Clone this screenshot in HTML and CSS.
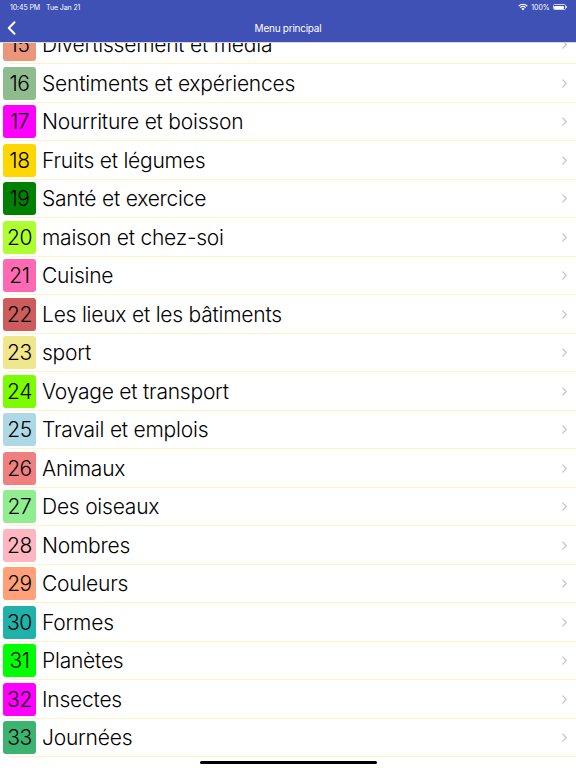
FILE: index.html
```html
<!DOCTYPE html>
<html lang="fr">
<head>
<meta charset="utf-8">
<title>Menu principal</title>
<link rel="stylesheet" href="styles.css">
</head>
<body>
<header class="bar">
  <div class="status">
    <span class="time">10:45 PM</span>
    <span class="date">Tue Jan 21</span>
    <span class="status-right">
      <svg class="wifi" width="10" height="8" viewBox="0 0 10 8"><path d="M5 7.6 3.4 5.8a2.4 2.4 0 0 1 3.2 0z" fill="#fff"/><path d="M1.9 4.2a4.6 4.6 0 0 1 6.2 0l-.8.9a3.4 3.4 0 0 0-4.6 0z" fill="#fff"/><path d="M.3 2.5a6.9 6.9 0 0 1 9.4 0l-.8.9a5.7 5.7 0 0 0-7.8 0z" fill="#fff"/></svg>
      <span class="pct">100%</span>
      <span class="battery"><span class="battery-fill"></span></span><span class="battery-tip"></span>
    </span>
  </div>
  <div class="nav">
    <svg class="back" width="9" height="14" viewBox="0 0 9 14"><path d="M7.5 1.2 1.8 7l5.7 5.8" fill="none" stroke="#fff" stroke-width="2" stroke-linecap="round" stroke-linejoin="round"/></svg>
    <span class="title">Menu principal</span>
  </div>
</header>
<main class="viewport">
  <ul class="list">
    <li class="row"><span class="num c15">15</span><span class="label">Divertissement et média</span><svg class="chev" width="5" height="9" viewBox="0 0 5 9"><path d="M.8.8 4.2 4.5.8 8.2"/></svg></li>
    <li class="row"><span class="num c16">16</span><span class="label">Sentiments et expériences</span><svg class="chev" width="5" height="9" viewBox="0 0 5 9"><path d="M.8.8 4.2 4.5.8 8.2"/></svg></li>
    <li class="row"><span class="num c17">17</span><span class="label">Nourriture et boisson</span><svg class="chev" width="5" height="9" viewBox="0 0 5 9"><path d="M.8.8 4.2 4.5.8 8.2"/></svg></li>
    <li class="row"><span class="num c18">18</span><span class="label">Fruits et légumes</span><svg class="chev" width="5" height="9" viewBox="0 0 5 9"><path d="M.8.8 4.2 4.5.8 8.2"/></svg></li>
    <li class="row"><span class="num c19">19</span><span class="label">Santé et exercice</span><svg class="chev" width="5" height="9" viewBox="0 0 5 9"><path d="M.8.8 4.2 4.5.8 8.2"/></svg></li>
    <li class="row"><span class="num c20">20</span><span class="label">maison et chez-soi</span><svg class="chev" width="5" height="9" viewBox="0 0 5 9"><path d="M.8.8 4.2 4.5.8 8.2"/></svg></li>
    <li class="row"><span class="num c21">21</span><span class="label">Cuisine</span><svg class="chev" width="5" height="9" viewBox="0 0 5 9"><path d="M.8.8 4.2 4.5.8 8.2"/></svg></li>
    <li class="row"><span class="num c22">22</span><span class="label">Les lieux et les bâtiments</span><svg class="chev" width="5" height="9" viewBox="0 0 5 9"><path d="M.8.8 4.2 4.5.8 8.2"/></svg></li>
    <li class="row"><span class="num c23">23</span><span class="label">sport</span><svg class="chev" width="5" height="9" viewBox="0 0 5 9"><path d="M.8.8 4.2 4.5.8 8.2"/></svg></li>
    <li class="row"><span class="num c24">24</span><span class="label">Voyage et transport</span><svg class="chev" width="5" height="9" viewBox="0 0 5 9"><path d="M.8.8 4.2 4.5.8 8.2"/></svg></li>
    <li class="row"><span class="num c25">25</span><span class="label">Travail et emplois</span><svg class="chev" width="5" height="9" viewBox="0 0 5 9"><path d="M.8.8 4.2 4.5.8 8.2"/></svg></li>
    <li class="row"><span class="num c26">26</span><span class="label">Animaux</span><svg class="chev" width="5" height="9" viewBox="0 0 5 9"><path d="M.8.8 4.2 4.5.8 8.2"/></svg></li>
    <li class="row"><span class="num c27">27</span><span class="label">Des oiseaux</span><svg class="chev" width="5" height="9" viewBox="0 0 5 9"><path d="M.8.8 4.2 4.5.8 8.2"/></svg></li>
    <li class="row"><span class="num c28">28</span><span class="label">Nombres</span><svg class="chev" width="5" height="9" viewBox="0 0 5 9"><path d="M.8.8 4.2 4.5.8 8.2"/></svg></li>
    <li class="row"><span class="num c29">29</span><span class="label">Couleurs</span><svg class="chev" width="5" height="9" viewBox="0 0 5 9"><path d="M.8.8 4.2 4.5.8 8.2"/></svg></li>
    <li class="row"><span class="num c30">30</span><span class="label">Formes</span><svg class="chev" width="5" height="9" viewBox="0 0 5 9"><path d="M.8.8 4.2 4.5.8 8.2"/></svg></li>
    <li class="row"><span class="num c31">31</span><span class="label">Planètes</span><svg class="chev" width="5" height="9" viewBox="0 0 5 9"><path d="M.8.8 4.2 4.5.8 8.2"/></svg></li>
    <li class="row"><span class="num c32">32</span><span class="label">Insectes</span><svg class="chev" width="5" height="9" viewBox="0 0 5 9"><path d="M.8.8 4.2 4.5.8 8.2"/></svg></li>
    <li class="row"><span class="num c33">33</span><span class="label">Journées</span><svg class="chev" width="5" height="9" viewBox="0 0 5 9"><path d="M.8.8 4.2 4.5.8 8.2"/></svg></li>
  </ul>
</main>
<div class="home"></div>
</body>
</html>
```
FILE: styles.css
```css
* { box-sizing: border-box; }
html, body { margin: 0; padding: 0; }
body {
  width: 576px;
  height: 768px;
  overflow: hidden;
  position: relative;
  background: #fff;
  font-family: Inter, "Liberation Sans", sans-serif;
  color: #000;
}
.bar {
  height: 43px;
  background: #3f51b5;
  color: #fff;
  border-bottom: 1px solid #d8d8dc;
  position: relative;
  z-index: 1;
}
.status {
  height: 14px;
  padding: 0 9px 0 10px;
  display: flex;
  align-items: center;
  font-size: 7px;
  letter-spacing: -0.1px;
}
.date { margin-left: 6px; }
.status-right { margin-left: auto; display: flex; align-items: center; gap: 3px; }
.battery {
  width: 13px;
  height: 6px;
  border: 0.5px solid #cfd4ee;
  border-radius: 1.5px;
  padding: 0.5px;
  display: flex;
}
.battery-fill { flex: 1; background: #fff; border-radius: 1px; }
.battery-tip { width: 1px; height: 2px; background: #cfd4ee; margin-left: -2.5px; }
.nav {
  height: 28px;
  position: relative;
  display: flex;
  align-items: center;
  justify-content: center;
}
.title { font-size: 10px; letter-spacing: -0.25px; }
.back { position: absolute; left: 7px; top: 7px; }
.viewport { height: 725px; overflow: hidden; }
.list {
  list-style: none;
  margin: -17.5px 0 0;
  padding: 0;
}
.row {
  height: 38.5px;
  display: flex;
  align-items: center;
  padding-left: 3px;
  padding-right: 9px;
  position: relative;
}
.row::after {
  content: "";
  position: absolute;
  left: 9px;
  right: 0;
  bottom: 0;
  height: 1px;
  background: #fdf3c4;
}
.num {
  width: 33px;
  height: 33px;
  border-radius: 3px;
  display: flex;
  align-items: center;
  justify-content: center;
  font-size: 21px;
  font-weight: 350;
  letter-spacing: -0.4px;
}
.label {
  margin-left: 6px;
  font-size: 21px;
  font-weight: 350;
  letter-spacing: -0.22px;
  flex: 1;
  white-space: nowrap;
}
.chev { fill: none; stroke: #c4c4c7; stroke-width: 1.2; stroke-linecap: round; stroke-linejoin: round; }
.home {
  position: absolute;
  left: 200px;
  bottom: 4px;
  width: 177px;
  height: 3px;
  border-radius: 2px;
  background: #000;
}
.c15 { background: #e9967a; }
.c16 { background: #8fbc8f; }
.c17 { background: #ff00ff; }
.c18 { background: #ffd700; }
.c19 { background: #008000; }
.c20 { background: #adff2f; }
.c21 { background: #ff69b4; }
.c22 { background: #cd5c5c; }
.c23 { background: #f0e68c; }
.c24 { background: #7cfc00; }
.c25 { background: #add8e6; }
.c26 { background: #f08080; }
.c27 { background: #90ee90; }
.c28 { background: #ffb6c1; }
.c29 { background: #ffa07a; }
.c30 { background: #20b2aa; }
.c31 { background: #00ff00; }
.c32 { background: #ff00ff; }
.c33 { background: #3cb371; }
```
